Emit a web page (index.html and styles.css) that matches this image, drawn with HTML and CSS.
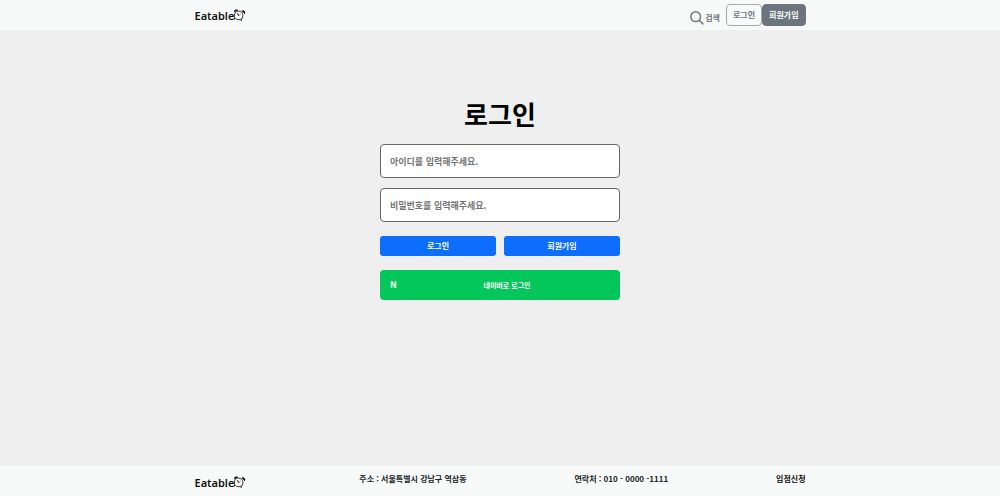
FILE: index.html
```html
<!DOCTYPE html>
<html lang="ko">
<head>
<meta charset="utf-8">
<meta name="viewport" content="width=device-width, initial-scale=1">
<title>Eatable - 로그인</title>
<link rel="stylesheet" href="styles.css">
</head>
<body>
<svg class="symbols" aria-hidden="true">
  <symbol id="clock" viewBox="0 0 24 24">
    <circle cx="11.500" cy="13" r="8.600" fill="#fff" stroke="#333" stroke-width="2"/>
    <path d="M1 8C.5 4 4 1.500 8 3ZM16 2.500c3.500-2.500 8 .5 7 5Z" fill="#111" stroke="#111"/>
    <path d="M5.500 19.500 3.500 22.500M17.500 19.500l1.700 3" stroke="#222" stroke-width="2.200"/>
    <path d="M12 13.500 8.200 9.500" stroke="#222" stroke-width="2"/>
    <path d="M12 13.500l3-4.500" stroke="#d99058" stroke-width="2"/>
  </symbol>
</svg>
<header class="bar">
  <div class="container header-row">
    <a class="logo" href="#">Eatable<svg class="logo-icon" aria-hidden="true"><use href="#clock"/></svg></a>
    <nav class="nav">
      <a class="search" href="#">
        <svg class="search-icon" viewBox="0 0 14 14" aria-hidden="true"><circle cx="5.700" cy="5.700" r="4.900"/><path d="m9.200 9.200 4.200 4.200"/></svg>
        <span>검색</span>
      </a>
      <button class="nav-button outline" type="button">로그인</button>
      <button class="nav-button filled" type="button">회원가입</button>
    </nav>
  </div>
</header>
<main class="main">
  <form class="login">
    <h1 class="title">로그인</h1>
    <input class="field" type="text" aria-label="아이디" placeholder="아이디를 입력해주세요.">
    <input class="field" type="password" aria-label="비밀번호" placeholder="비밀번호를 입력해주세요.">
    <div class="actions">
      <button class="action" type="submit">로그인</button>
      <button class="action" type="button">회원가입</button>
    </div>
    <button class="naver" type="button"><span class="naver-mark">N</span><span class="naver-label">네이버로 로그인</span></button>
  </form>
</main>
<footer class="bar">
  <div class="container footer-row">
    <a class="logo footer-logo" href="#">Eatable<svg class="logo-icon" aria-hidden="true"><use href="#clock"/></svg></a>
    <span>주소 : 서울특별시 강남구 역삼동</span>
    <span>연락처 : 010 - 0000 -1111</span>
    <a class="apply" href="#">입점신청</a>
  </div>
</footer>
</body>
</html>
```
FILE: styles.css
```css
* {
  box-sizing: border-box;
}

body {
  display: flex;
  flex-direction: column;
  min-height: 100vh;
  margin: 0;
  background: #efefef;
  color: #212529;
  font-family: "Noto Sans CJK KR", sans-serif;
  font-size: 8px;
  font-weight: 700;
  line-height: 12px;
}

a {
  color: inherit;
  text-decoration: none;
}

button,
input {
  margin: 0;
  font: inherit;
}

.symbols {
  position: absolute;
  width: 0;
  height: 0;
}

.bar {
  background: #f8faf9;
}

.container {
  display: flex;
  justify-content: space-between;
  width: 100%;
  max-width: 643px;
  margin: 0 auto;
  padding: 0 16px;
}

.header-row {
  align-items: center;
  height: 30px;
}

.logo {
  display: flex;
  align-items: center;
  padding-top: 2px;
  color: #111;
  font-family: "Noto Sans", sans-serif;
  font-size: 11px;
  font-weight: 600;
  line-height: 16px;
}

.logo-icon {
  width: 12px;
  height: 12px;
  margin-bottom: 2px;
  margin-left: -1px;
  fill: none;
  transform: rotate(12deg);
}

.nav {
  display: flex;
  align-items: center;
}

.search {
  display: flex;
  align-items: center;
  gap: 1px;
  margin-right: 6px;
  padding-top: 5px;
  color: #6c757d;
}

.search-icon {
  width: 14px;
  height: 14px;
  fill: none;
  stroke: #777;
  stroke-width: 1.5;
}

.nav-button {
  height: 22px;
  padding: 0 6px;
  border: 1px solid #6c757d;
  border-radius: 4px;
}

.outline {
  border-color: #a4abb0;
  background: transparent;
  color: #6c757d;
}

.filled {
  background: #6c757d;
  color: #fff;
}

.main {
  flex: 1;
  padding: 64px 16px;
}

.login {
  display: flex;
  flex-direction: column;
  width: 100%;
  max-width: 240px;
  margin: 0 auto;
}

.title {
  margin: 0 0 10px;
  color: #000;
  font-size: 26px;
  font-weight: 700;
  line-height: 40px;
  text-align: center;
}

.field {
  width: 100%;
  height: 34px;
  margin-bottom: 10px;
  padding: 0 9px;
  border: 1px solid #666;
  border-radius: 4px;
  background: #fff;
  font-size: 9px;
}

.field::placeholder {
  color: #757575;
}

.actions {
  display: grid;
  grid-template-columns: 1fr 1fr;
  gap: 8px;
  margin: 4px 0 14px;
}

.action {
  height: 20px;
  padding: 0;
  border: 0;
  border-radius: 3px;
  background: #0d6efd;
  color: #fff;
}

.naver {
  display: flex;
  align-items: center;
  height: 30px;
  padding: 0 10px;
  border: 0;
  border-radius: 4px;
  background: #03c75a;
  color: #fff;
  font-size: 7px;
}

.naver-mark {
  width: 14px;
  font-size: 9px;
  text-align: left;
}

.naver-label {
  flex: 1;
}

.footer-row {
  align-items: flex-start;
  min-height: 30px;
  padding-top: 7px;
}

.footer-logo {
  padding-right: 6px;
}

.apply {
  color: #111;
}
```
